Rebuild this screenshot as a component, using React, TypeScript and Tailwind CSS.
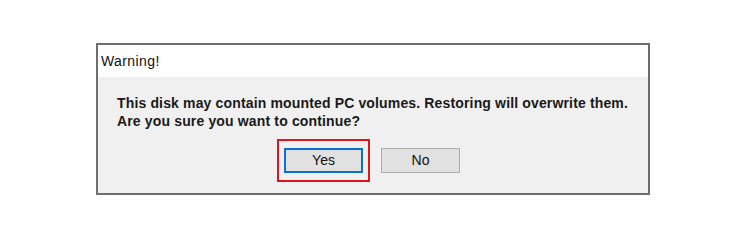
import React from 'react';

export default function App() {
  return (
    <div className="w-[755px] h-[244px] bg-white pt-[43px] pl-[96px] font-['Liberation_Sans',sans-serif]">
      {/* Dialog */}
      <div className="w-[554px] h-[152px] border-2 border-[#6e6e6e] flex flex-col">
        <div className="h-[32px] bg-white pl-[3px] flex items-center text-[14px] tracking-[0.4px] text-[#111]">
          Warning!
        </div>
        <div className="flex-1 bg-[#f0f0f0] pt-[17px] pl-[19px]">
          <p className="text-[14px] leading-[18px] tracking-[0.15px] font-bold text-[#1a1a1a]">
            This disk may contain mounted PC volumes. Restoring will overwrite them.
            <br />
            Are you sure you want to continue?
          </p>
          <div className="flex items-center mt-[9px] pl-[160px]">
            {/* highlight */}
            <div className="border-2 border-[#e0141e] px-[5px] py-[7px]">
              <button className="w-[79px] h-[25px] bg-[#e1e1e1] border-2 border-[#0a6fd0] text-[14px] text-[#111] flex items-center justify-center">
                Yes
              </button>
            </div>
            <button className="ml-[11px] w-[79px] h-[25px] bg-[#e1e1e1] border border-[#adadad] text-[14px] text-[#111] flex items-center justify-center">
              No
            </button>
          </div>
        </div>
      </div>
    </div>
  );
}
